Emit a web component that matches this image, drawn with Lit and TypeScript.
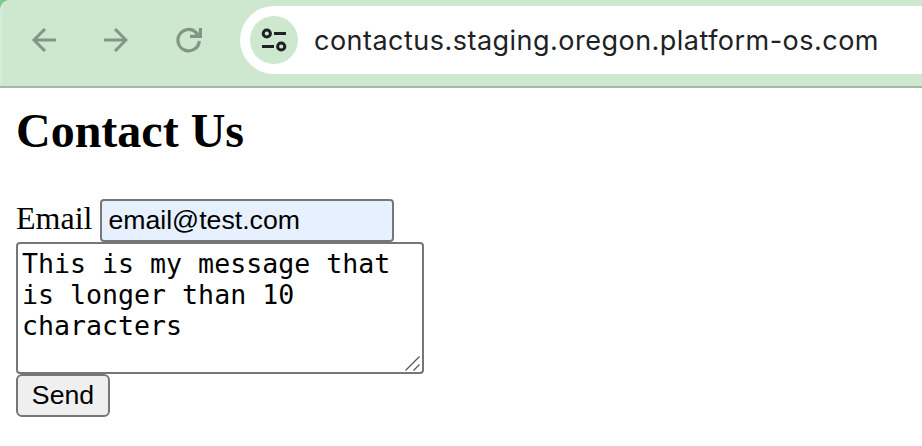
import { LitElement, html, css } from "lit";
import { customElement } from "lit/decorators.js";

@customElement("browser-toolbar")
class BrowserToolbar extends LitElement {
  static styles = css`
    :host {
      display: block;
      background: #7fc98a;
    }
    .bar {
      box-sizing: border-box;
      height: 88px;
      display: flex;
      align-items: flex-start;
      padding-top: 6px;
      background: #cde8cf;
      border-bottom: 2px solid #a4b9a6;
      box-shadow: inset 2px 0 #d5edd8;
      border-top-left-radius: 10px;
    }
    .nav {
      display: flex;
      gap: 48px;
      padding: 22px 0 0 31px;
      color: #849585;
    }
    svg {
      display: block;
    }
    .omnibox {
      box-sizing: border-box;
      flex: 1;
      height: 68px;
      margin-left: 40px;
      padding-left: 10px;
      display: flex;
      align-items: center;
      background: #fff;
      border-radius: 34px 0 0 34px;
    }
    .site {
      width: 48px;
      height: 48px;
      border-radius: 50%;
      background: #cde8cf;
      color: #202124;
    }
    .url {
      margin-left: 16px;
      padding-top: 2px;
      font: 27px/34px Inter, sans-serif;
      letter-spacing: 0.48px;
      color: #202124;
      white-space: nowrap;
    }
  `;

  render() {
    return html`
      <div class="bar">
        <div class="nav">
          <svg width="25" height="24" viewBox="0 0 25 24" fill="none" stroke="currentColor" stroke-width="3">
            <path d="M25 12H3M14 1L3 12L14 23" />
          </svg>
          <svg width="24" height="24" viewBox="0 0 24 24" fill="none" stroke="currentColor" stroke-width="3">
            <path d="M0 12H22M11 1L22 12L11 23" />
          </svg>
          <svg width="24" height="24" viewBox="0 0 24 24" fill="none" stroke="currentColor" stroke-width="3.2" overflow="visible">
            <path d="M23.3 13A10.7 10.7 0 1 1 20 4.4L23.5 8.2M24.4 0V8.4H14" />
            <path d="M19 5L24 9H19Z" fill="currentColor" stroke="none" />
          </svg>
        </div>
        <div class="omnibox">
          <svg class="site" viewBox="0 0 48 48" fill="none" stroke="currentColor" stroke-width="3">
            <circle cx="16.8" cy="17.5" r="3.6" />
            <path d="M24 17.5H36M12 30.5H24" />
            <circle cx="31.2" cy="30.5" r="3.6" />
          </svg>
          <span class="url">contactus.staging.oregon.platform-os.com</span>
        </div>
      </div>
    `;
  }
}

@customElement("contact-form")
class ContactForm extends LitElement {
  static styles = css`
    :host {
      display: block;
      padding: 15px 16px;
      font: 32px/37px "Liberation Serif", serif;
      color: #000;
    }
    h1 {
      margin: 0 0 41px;
      font-size: 48px;
      line-height: 55px;
      font-weight: bold;
    }
    .row {
      display: flex;
      align-items: flex-start;
      gap: 8px;
    }
    label {
      line-height: 39px;
    }
    input,
    textarea,
    button {
      box-sizing: border-box;
      display: block;
      margin: 0;
      border: 2px solid #767676;
      outline: none;
      color: #000;
    }
    input {
      width: 294px;
      height: 43px;
      padding: 0 6px;
      border-radius: 4px;
      background: #e6f0fe;
      font: 26.67px "Liberation Sans", sans-serif;
    }
    .message {
      position: relative;
      width: 408px;
    }
    textarea {
      width: 408px;
      height: 132px;
      padding: 4px;
      border-radius: 4px;
      background: #fff;
      resize: none;
      overflow: hidden;
      font: 26.6px/31px "DejaVu Sans Mono", monospace;
    }
    .grip {
      position: absolute;
      right: 4px;
      bottom: 3px;
    }
    button {
      width: 94px;
      height: 43px;
      padding: 0;
      border-radius: 6px;
      background: #efefef;
      font: 26.67px "Liberation Sans", sans-serif;
    }
  `;

  render() {
    return html`
      <h1>Contact Us</h1>
      <div class="row">
        <label for="email">Email</label>
        <input id="email" type="text" .value=${"email@test.com"} />
      </div>
      <div class="message">
        <textarea spellcheck="false" .value=${"This is my message that is longer than 10 characters"}></textarea>
        <svg class="grip" width="15" height="15" viewBox="0 0 15 15" fill="none" stroke="#555" stroke-width="1.3">
          <path d="M.5 14.5L14.5.5M8.5 14.5L14.5 8.5" />
        </svg>
      </div>
      <button type="button">Send</button>
    `;
  }
}

@customElement("app-root")
class AppRoot extends LitElement {
  static styles = css`
    :host {
      display: block;
      height: 446px;
      overflow: hidden;
      background: #fff;
    }
  `;

  render() {
    return html`
      <browser-toolbar></browser-toolbar>
      <contact-form></contact-form>
    `;
  }
}
